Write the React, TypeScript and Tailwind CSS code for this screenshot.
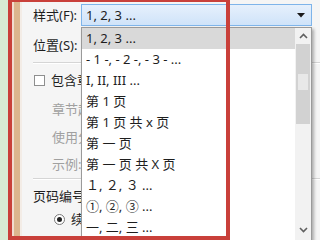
import React from "react";

const items = [
  "1, 2, 3 ...",
  "- 1 -, - 2 -, - 3 - ...",
  "I, II, III ...",
  "第 1 页",
  "第 1 页 共 x 页",
  "第 一 页",
  "第 一 页 共 X 页",
  "１, ２, ３ ...",
  "①, ②, ③ ...",
  "一, 二, 三 ...",
];

export default function App() {
  return (
    <div
      className="relative w-[320px] h-[240px] overflow-hidden flex bg-[#f5f5f5] text-[13px] leading-none text-[#1e1e1e]"
      style={{ fontFamily: '"Noto Sans", "Noto Sans CJK SC", sans-serif' }}
    >
      <div className="w-[8px] shrink-0 bg-[#d8ecd4]" />
      <div className="w-[4px] shrink-0 bg-[#d9c0b0]" />
      <div className="w-[2px] shrink-0 bg-[#f2dcd0]" />
      <div className="w-[6px] shrink-0 bg-[#dcb58e]" />
      <div className="w-[2px] shrink-0 bg-[#f3ece6]" />

      {/* dialog content */}
      <div className="flex-1 flex flex-col pl-[11px] bg-[#f5f5f5]">
        <div className="flex items-center mt-[4px] h-[22px]">
          <div className="w-[48px] shrink-0">样式(F):</div>
          <div className="flex-1 mr-[8px] h-[22px] border border-[#7eb4ea] bg-gradient-to-b from-[#e6f0fc] to-[#cfe3f9] flex items-center pl-[4px] pr-[6px]">
            <span className="flex-1">1, 2, 3 ...</span>
            <svg width="8" height="5" viewBox="0 0 8 5">
              <path d="M0 0 H8 L4 4.5 Z" fill="#1a1a1a" />
            </svg>
          </div>
        </div>
        <div className="mt-[9px] h-[20px] w-[48px] overflow-hidden flex items-center whitespace-nowrap">位置(S):</div>
        <div className="mt-[7px] h-px bg-[#d5d5d5]" />
        <div className="h-px bg-white" />
        <div className="mt-[6px] h-[20px] w-[48px] overflow-hidden flex items-center">
          <div className="ml-[1px] w-[11px] h-[11px] shrink-0 border border-[#8e8f8f] bg-white" />
          <span className="ml-[6px] whitespace-nowrap">包含章节号(N)</span>
        </div>
        <div className="mt-[9px] h-[20px] w-[48px] overflow-hidden flex items-center pl-[19px] text-[#a0a0a0] whitespace-nowrap">
          章节起始样式(P):
        </div>
        <div className="mt-[8px] h-[20px] w-[48px] overflow-hidden flex items-center pl-[19px] text-[#a0a0a0] whitespace-nowrap">
          使用分隔符(E):
        </div>
        <div className="mt-[7px] h-[20px] w-[48px] overflow-hidden flex items-center pl-[19px] text-[#a0a0a0] whitespace-nowrap">
          示例:
        </div>
        <div className="mt-[4px] h-px bg-[#d5d5d5]" />
        <div className="h-px bg-white" />
        <div className="mt-[6px] h-[20px] w-[48px] overflow-hidden flex items-center whitespace-nowrap">页码编号</div>
        <div className="mt-[3px] h-[20px] w-[48px] overflow-hidden flex items-center pl-[21px] whitespace-nowrap">
          <div className="w-[11px] h-[11px] shrink-0 rounded-full border border-[#7a7a7a] bg-white flex items-center justify-center">
            <div className="w-[5px] h-[5px] rounded-full bg-[#222]" />
          </div>
          <span className="ml-[6px]">续前节(C)</span>
        </div>
      </div>

      {/* dropdown list */}
      <div className="absolute left-[81px] top-[27px] w-[231px] h-[216px] bg-white border border-[#9a9a9a] shadow-[2px_2px_3px_rgba(0,0,0,0.3)] flex">
        <div className="flex-1 flex flex-col">
          {items.map((t, i) => (
            <div
              key={i}
              className={
                "h-[21px] shrink-0 flex items-center pl-[4px] whitespace-nowrap " +
                (i === 0 ? "bg-[#d9d9d9]" : "")
              }
            >
              {t}
            </div>
          ))}
        </div>
        <div className="w-[16px] shrink-0 bg-[#f2f2f2] flex flex-col items-center">
          <div className="h-[16px] flex items-center justify-center">
            <svg width="9" height="6" viewBox="0 0 9 6">
              <path d="M1 5 L4.5 1.5 L8 5" stroke="#606060" strokeWidth="1.6" fill="none" />
            </svg>
          </div>
          <div className="w-[14px] h-[80px] bg-[#d2d2d2] flex flex-col items-center">
            <div className="mt-[30px] w-[10px] h-[16px] bg-[#e8e8e8]" />
          </div>
          <div className="flex-1" />
          <div className="h-[16px] mb-[4px] flex items-center justify-center">
            <svg width="9" height="6" viewBox="0 0 9 6">
              <path d="M1 1 L4.5 4.5 L8 1" stroke="#606060" strokeWidth="1.6" fill="none" />
            </svg>
          </div>
        </div>
      </div>

      {/* red annotation rectangle */}
      <div className="absolute left-[8px] top-[-2px] w-[222px] h-[242px] border-[4px] border-[#c9403a] pointer-events-none" />
    </div>
  );
}
